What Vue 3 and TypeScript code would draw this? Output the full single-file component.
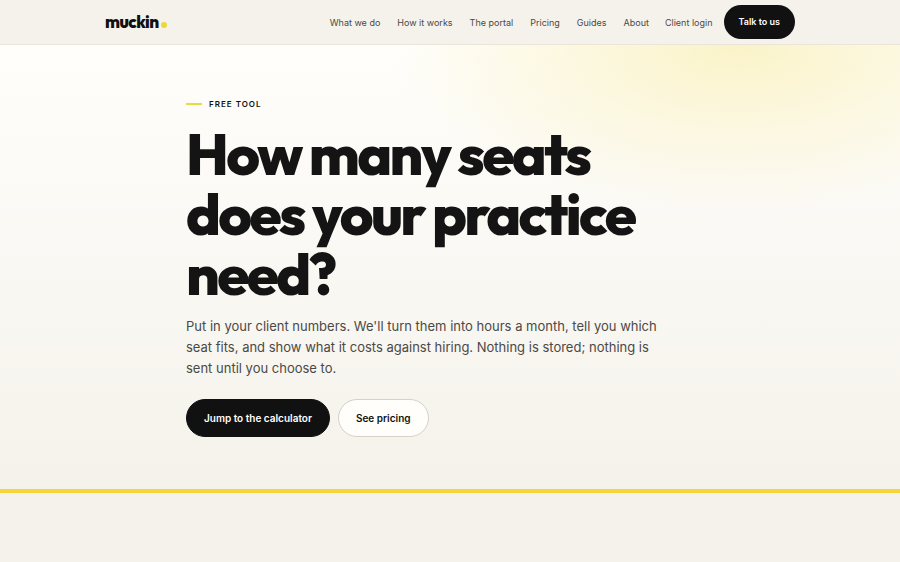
<script setup lang="ts">
interface NavLink { label: string; href: string }
const links: NavLink[] = [
  { label: 'What we do', href: '#what' },
  { label: 'How it works', href: '#how' },
  { label: 'The portal', href: '#portal' },
  { label: 'Pricing', href: '#pricing' },
  { label: 'Guides', href: '#guides' },
  { label: 'About', href: '#about' },
]
</script>

<template>
  <div class="page">
    <header class="bar">
      <div class="bar-inner">
        <a class="brand" href="#home">muckin<span class="dot"></span></a>
        <nav class="nav">
          <a v-for="link in links" :key="link.href" :href="link.href">{{ link.label }}</a>
        </nav>
        <div class="actions">
          <a class="login" href="#login">Client login</a>
          <a class="talk" href="#talk">Talk to us</a>
        </div>
      </div>
    </header>
    <main class="hero">
      <div class="hero-inner">
        <p class="eyebrow">Free tool</p>
        <h1>How many seats does your practice need?</h1>
        <p class="lead">Put in your client numbers. We'll turn them into hours a month, tell you which seat fits, and show what it costs against hiring. Nothing is stored; nothing is sent until you choose to.</p>
        <div class="buttons">
          <a class="btn dark" href="#calculator">Jump to the calculator</a>
          <a class="btn light" href="#pricing">See pricing</a>
        </div>
      </div>
    </main>
  </div>
</template>

<style>
body { background: #f5f2eb; }
</style>

<style scoped>
.page { font-family: Inter, sans-serif; color: #111; }
a { color: inherit; text-decoration: none; }
.bar { background: #f5f2eb; border-bottom: 1px solid #e9e5da; }
.bar-inner { max-width: 690px; margin: 0 auto; padding: 5px 24px; display: flex; align-items: center; }
.brand { display: flex; align-items: baseline; gap: 2px; font: 800 17px/24px Outfit, Lato, sans-serif; letter-spacing: -0.03em; margin-right: auto; }
.dot { width: 6px; height: 6px; border-radius: 50%; background: #ebd834; }
.nav { display: flex; gap: 17px; font-size: 9px; color: #4b4945; }
.actions { display: flex; align-items: center; gap: 11px; margin-left: 16px; font-size: 9px; color: #4b4945; }
.talk { background: #111; color: #fff; font-weight: 600; border-radius: 20px; padding: 0 15px; line-height: 34px; }
.hero { border-bottom: 4px solid #f5d53c; background: radial-gradient(ellipse 350px 165px at 82% 0, #faf3c8, #faf3c800), linear-gradient(#fffefb, #f5f2eb); }
.hero-inner { max-width: 528px; margin: 0 auto; padding: 52px 24px; }
.eyebrow { margin: 0 0 13px; display: flex; align-items: center; gap: 7px; font-size: 8px; line-height: 14px; font-weight: 600; letter-spacing: 1px; text-transform: uppercase; }
.eyebrow::before { content: ''; width: 16px; height: 2px; background: #e8dc3c; }
h1 { margin: 0; max-width: 490px; color: #141414; font: 800 58px/60px Outfit, Lato, sans-serif; letter-spacing: -0.045em; }
.lead { margin: 12px 0 20px; font-size: 13px; line-height: 21px; color: #4b4945; max-width: 490px; }
.buttons { display: flex; gap: 8px; }
.btn { border-radius: 20px; border: 1px solid #111; padding: 0 17px; font-size: 10px; line-height: 36px; font-weight: 600; }
.dark { background: #111; color: #fff; }
.light { background: #fffefb; border-color: #d6d0c8; }
</style>
